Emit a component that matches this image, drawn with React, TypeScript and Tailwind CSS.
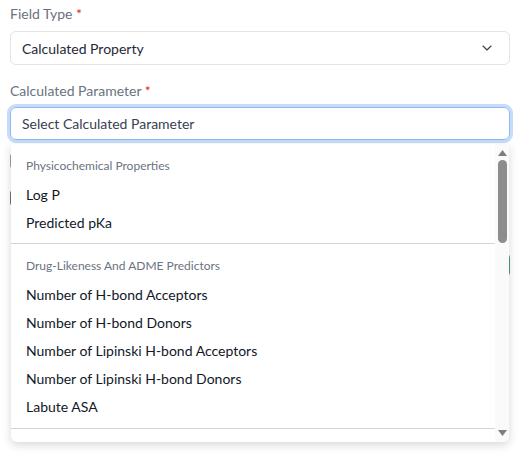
import { ChevronDown } from "lucide-react";

const groups = [
  { title: "Physicochemical Properties", items: ["Log P", "Predicted pKa"] },
  {
    title: "Drug-Likeness And ADME Predictors",
    items: [
      "Number of H-bond Acceptors",
      "Number of H-bond Donors",
      "Number of Lipinski H-bond Acceptors",
      "Number of Lipinski H-bond Donors",
      "Labute ASA",
    ],
  },
];

export default function App() {
  return (
    <div className="h-[460px] w-[522px] overflow-hidden bg-white pl-[10px] pr-[12px] pt-[4px] font-['Lato',sans-serif] text-[14px]">
      <div className="h-[20px] leading-[20px] text-[#6b7280]">
        Field Type <span className="text-[#dc2626]">*</span>
      </div>
      <div className="mt-[7px] flex h-[34px] items-center justify-between rounded-[6px] border border-[#e2e4e8] pl-[11px] pr-[14px] text-[#1f2937]">
        <span>Calculated Property</span>
        <ChevronDown className="h-[16px] w-[16px] text-[#374151]" strokeWidth={1.75} />
      </div>

      <div className="mt-[16px] h-[20px] leading-[20px] text-[#6b7280]">
        Calculated Parameter <span className="text-[#dc2626]">*</span>
      </div>
      <div className="relative mt-[6px]">
        <div className="flex h-[33px] items-center rounded-[6px] border border-[#8fb8f0] pl-[11px] text-[#374151] ring-[3px] ring-[#c6dcfb]">
          Select Calculated Parameter
        </div>

        {/* fields hidden behind the open menu */}
        <div className="mt-[14px] h-[14px] w-[70px] rounded-[2px] bg-[#9ca3af]" />
        <div className="mt-[22px] h-[16px] w-[16px] rounded-[3px] border border-[#6b7280]" />
        <div className="mt-[46px] flex justify-end">
          <div className="h-[26px] w-[80px] rounded-[6px] border border-[#4a9a76] bg-white" />
        </div>

        <div className="absolute left-[1px] right-[1px] top-[37px] z-10 flex h-[298px] overflow-hidden rounded-b-[6px] bg-white shadow-[0_3px_10px_rgba(0,0,0,0.16)]">
          <div className="min-w-0 flex-1">
            {groups.map((g, i) => (
              <div
                key={g.title}
                className={`border-b border-[#d4d4d4] pt-[6px] ${i === 0 ? "pb-[7px]" : "pb-[8px]"}`}
              >
                <div className="flex h-[30px] items-center pl-[15px] pt-[2px] text-[12px] text-[#6b7280]">
                  {g.title}
                </div>
                {g.items.map((it) => (
                  <div key={it} className="flex h-[28px] items-center whitespace-nowrap pl-[15px] text-[#111827]">
                    {it}
                  </div>
                ))}
              </div>
            ))}
          </div>
          <div className="flex w-[14px] flex-col items-center bg-[#fafafa]">
            <svg width="9" height="6" viewBox="0 0 9 6" className="mt-[6px]">
              <path d="M4.5 0 L9 6 L0 6 Z" fill="#7d7d7d" />
            </svg>
            <div className="mt-[4px] h-[83px] w-[9px] rounded-full bg-[#8c8c8c]" />
            <div className="flex-1" />
            <svg width="9" height="6" viewBox="0 0 9 6" className="mb-[6px]">
              <path d="M0 0 L9 0 L4.5 6 Z" fill="#7d7d7d" />
            </svg>
          </div>
        </div>
      </div>
    </div>
  );
}
